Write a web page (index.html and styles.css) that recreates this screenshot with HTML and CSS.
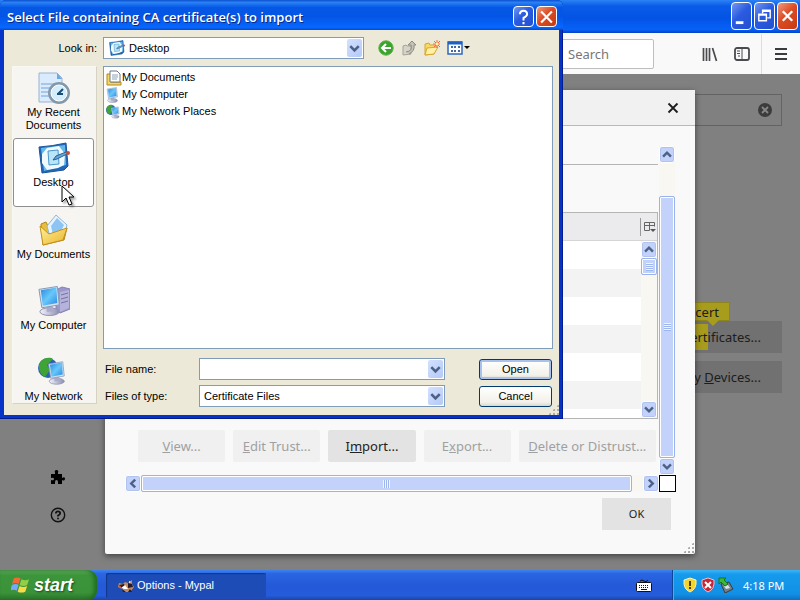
FILE: index.html
```html
<!DOCTYPE html>
<html lang="en">
<head>
<meta charset="UTF-8" />
<meta name="viewport" content="width=device-width, initial-scale=1" />
<title>Options - Mypal</title>
<link rel="stylesheet" href="styles.css">
</head>
<body>

<!-- shared icons -->
<svg class="defs" aria-hidden="true">
  <linearGradient id="screen" x1="0" y1="0" x2="1" y2="1">
    <stop offset="0" stop-color="#2a86dd" /><stop offset=".5" stop-color="#68c8fa" /><stop offset="1" stop-color="#2b87e3" />
  </linearGradient>
  <linearGradient id="metal" x1="0" y1="0" x2="1" y2="0">
    <stop offset="0" stop-color="#f4f4fb" /><stop offset="1" stop-color="#8c8cb4" />
  </linearGradient>
  <linearGradient id="folder" x1="0" y1="0" x2="1" y2="1">
    <stop offset="0" stop-color="#fff09a" /><stop offset="1" stop-color="#eab42c" />
  </linearGradient>
  <symbol id="chevron" viewBox="0 0 16 16">
    <path d="M3.5 5.5 8 10l4.500-4.500" fill="none" stroke="#4d6185" stroke-width="2.8" />
  </symbol>
  <symbol id="desktop" viewBox="0 0 32 32">
    <path d="M1 5Q15 4 28 1l2 23-4 4-22 3Z" fill="#2168b8" stroke="#1b559c" />
    <path d="M3 6 27 3l1 20-22 6Z" fill="#62b8ec" />
    <path d="m9 6 12-2 6 8-1 11-6 3-11 2-5-7V12Z" fill="#f0fafa" />
    <path d="m10 9 10-1 1 14-10 1Z" fill="#b9e5f8" stroke="#4c96cb" />
    <path d="m15 18 3-4 10-4 1 2-10 5Z" fill="#6ba4d6" stroke="#28619a" />
    <circle cx="30" cy="11" r="2" fill="#c64d39" />
  </symbol>
  <symbol id="documents" viewBox="0 0 32 32">
    <path d="m3 10 5-2 2 4 12 3 7-1-3 12L5 31Z" fill="#e9bd3c" stroke="#b38419" />
    <path d="M9 12 18 1l11 10-3 11-14 1Z" fill="#e7f4ff" stroke="#8fb6d8" />
    <path d="m13 12 6-8 7 7-4 8-7 2Z" fill="#8cc5f3" />
    <path d="m2 12 9 8 18-6-4 12L5 31Z" fill="url(#folder)" stroke="#c19120" />
  </symbol>
  <symbol id="papers" viewBox="0 0 16 16">
    <path d="M1 4h4v8h10v3H1Z" fill="#f6d75f" stroke="#ad8a27" />
    <path d="M4 1h7l3 3v8H4Z" fill="#fff" stroke="#6c7789" />
    <path d="M6 5h6M6 7h6M6 9h5" stroke="#8da0b5" />
  </symbol>
  <symbol id="monitor" viewBox="0 0 32 32">
    <ellipse cx="13" cy="27" rx="10" ry="4" fill="url(#metal)" stroke="#8f8fae" />
    <path d="M10 20h6l1 7h-7Z" fill="#aaaacb" />
    <path d="m2 4 19-3 2 19-18 3Z" fill="#d5e3f2" stroke="#8399b5" />
    <path d="m4 5 16-3 1 16-15 3Z" fill="url(#screen)" />
  </symbol>
  <symbol id="computer" viewBox="0 0 32 32">
    <path d="m18 5 6-3 8 2v20l-10 4-4-3Z" fill="#9b97cb" stroke="#8380b4" />
    <path d="m22 7 9-2v18l-9 4Z" fill="#b5b2dc" />
    <path d="m23 10 7-2m-7 6 7-2m-7 6 7-2" stroke="#77739f" />
    <use href="#monitor" width="31" height="32" x="-1" />
  </symbol>
  <symbol id="network" viewBox="0 0 32 32">
    <circle cx="10" cy="12" r="10" fill="#2b62b9" />
    <path d="M3 5c4-4 10-4 12-2L9 9l3 5-5 7C1 18-1 10 3 5Z" fill="#3fa335" />
    <use href="#monitor" x="9" y="2" width="24" height="30" />
  </symbol>
</svg>

<main class="desktop">

  <section class="browser" aria-label="Options - Mypal">
    <header class="browser-title">
      <button class="caption" aria-label="Minimize"><svg viewBox="0 0 20 24"><path d="M4 19h8" stroke="#fff" stroke-width="3" /></svg></button>
      <button class="caption" aria-label="Restore"><svg viewBox="0 0 20 24"><path d="M8 9V6h8v8h-3M8 7h8M4 10h8v7H4ZM4 11h8" fill="none" stroke="#fff" stroke-width="1.5" /></svg></button>
      <button class="caption caption-close" aria-label="Close"><svg viewBox="0 0 20 24"><path d="m5 7 10 10M15 7 5 17" stroke="#fff" stroke-width="2.4" /></svg></button>
    </header>
    <nav class="toolbar">
      <input class="web-search" type="search" placeholder="Search" aria-label="Search the web">
      <button class="tool" aria-label="Library"><svg viewBox="0 0 16 16"><path d="M1.5 2v13M4.5 2v13M7.5 2v13M10.5 2l4 13" fill="none" stroke="#4a4a4f" stroke-width="1.7" /></svg></button>
      <button class="tool" aria-label="Sidebars"><svg viewBox="0 0 16 16"><rect x="1" y="2" width="14" height="12" rx="2" fill="none" stroke="#4a4a4f" stroke-width="1.8" /><path d="M8 2v12M3 5h3M3 7.5h3M4 10h2" stroke="#4a4a4f" /></svg></button>
      <button class="tool tool-menu" aria-label="Open menu"><svg viewBox="0 0 16 16"><path d="M2 3h12M2 8h12M2 13h12" stroke="#3a3a3f" stroke-width="1.8" /></svg></button>
    </nav>
    <div class="page">
      <aside class="page-side">
        <a href="#addons" aria-label="Extensions and themes"><svg viewBox="0 0 16 16"><path d="M1 5h4V3.5Q4 1 6.500 1T8 3.500V5h4v4q3-2 3 .8T12 11v4H8v-2q0-2-1.500-2T5 13v2H1v-4q3 1 3-1T1 9Z" /></svg></a>
        <a href="#support" aria-label="Support"><svg viewBox="0 0 16 16"><circle cx="8" cy="8" r="6.7" fill="none" stroke="#111" stroke-width="1.4" /><path d="M5.800 6.500Q6 4.300 8 4.300t2.200 2Q10.200 7.500 8 8.500v1M8 10.800v1.500" fill="none" stroke="#111" stroke-width="1.8" /></svg></a>
      </aside>
      <div class="page-main">
        <div class="option-search">
          <button aria-label="Clear search"><svg viewBox="0 0 16 16"><circle cx="8" cy="8" r="7" fill="#3c3c3c" /><path d="m5 5 6 6m0-6-6 6" stroke="#888" stroke-width="1.8" /></svg></button>
        </div>
        <span class="match-tip">cert</span>
        <button class="page-button">View <mark>Cert</mark>ificates...</button>
        <button class="page-button">Security <u>D</u>evices...</button>
      </div>
    </div>
  </section>

  <section class="manager" role="dialog" aria-label="Certificate Manager">
    <header class="manager-head">
      <button aria-label="Close"><svg viewBox="0 0 12 12"><path d="m1.500 1.500 9 9m0-9-9 9" stroke="#1c1c1c" stroke-width="1.8" /></svg></button>
    </header>
    <div class="manager-scroll">
      <div class="manager-content">
        <div class="tabs"></div>
        <div class="certs">
          <div class="certs-head">
            <button aria-label="Select columns to display"><svg viewBox="0 0 12 12"><path d="M.5 1.500h10v4M.5 1.500v8h5M.5 4.500h10M5.500 1.500v8" fill="none" stroke="#666" /><path d="M6 8h6l-3 3Z" fill="#555" /></svg></button>
          </div>
          <div class="certs-body">
            <div class="cert-rows"></div>
            <div class="scroll scroll-v">
              <button aria-label="Scroll up"><svg class="up"><use href="#chevron" /></svg></button>
              <div class="thumb thumb-short"><i class="grip"></i></div>
              <button class="end" aria-label="Scroll down"><svg><use href="#chevron" /></svg></button>
            </div>
          </div>
        </div>
        <div class="actions">
          <button disabled><u>V</u>iew...</button>
          <button disabled><u>E</u>dit Trust...</button>
          <button>I<u>m</u>port...</button>
          <button disabled>E<u>x</u>port...</button>
          <button class="wide" disabled><u>D</u>elete or Distrust...</button>
        </div>
      </div>
      <div class="scroll scroll-v">
        <button aria-label="Scroll up"><svg class="up"><use href="#chevron" /></svg></button>
        <div class="track"></div>
        <div class="thumb thumb-fill"><i class="grip"></i></div>
        <button aria-label="Scroll down"><svg><use href="#chevron" /></svg></button>
      </div>
      <div class="scroll scroll-h">
        <button aria-label="Scroll left"><svg class="left"><use href="#chevron" /></svg></button>
        <div class="thumb thumb-fill"><i class="grip"></i></div>
        <div class="track"></div>
        <button aria-label="Scroll right"><svg class="right"><use href="#chevron" /></svg></button>
      </div>
      <div class="corner"></div>
    </div>
    <footer class="manager-foot"><button>OK</button></footer>
    <i class="resizer"></i>
  </section>

  <section class="picker" role="dialog" aria-labelledby="pickerTitle">
    <header class="picker-title">
      <h1 id="pickerTitle">Select File containing CA certificate(s) to import</h1>
      <button class="caption caption-small" aria-label="Help"><svg viewBox="0 0 20 20"><path d="M6 7q0-4 4-4t4 4q0 2-4 4v3M10 15.500V18" fill="none" stroke="#fff" stroke-width="2.2" /></svg></button>
      <button class="caption caption-small caption-close" aria-label="Close"><svg viewBox="0 0 20 20"><path d="m4 4 12 12M16 4 4 16" stroke="#fff" stroke-width="2.4" /></svg></button>
    </header>
    <div class="picker-body">
      <label class="look-label" for="lookIn">Look in:</label>
      <div class="look-row">
        <div class="combo combo-look">
          <svg class="combo-icon"><use href="#desktop" /></svg>
          <select id="lookIn"><option>Desktop</option></select>
          <span class="arrow"><svg><use href="#chevron" /></svg></span>
        </div>
        <div class="picker-tools">
          <button aria-label="Back"><svg viewBox="0 0 16 16"><circle cx="8" cy="8" r="7.2" fill="#3ba42d" stroke="#5bb04c" /><path d="M13 8H4m4-4L4 8l4 4" fill="none" stroke="#fff" stroke-width="2" /></svg></button>
          <button aria-label="Up one level"><svg viewBox="0 0 16 16"><path d="m2 6 3-1 1 1h4v8l-8 1Z" fill="#d6d4c9" stroke="#a5a398" /><path d="M5 12q7-1 5-7H7l4-4 4 4h-2q1 6-5 9" fill="#c4c2b8" stroke="#8d8b82" /></svg></button>
          <button aria-label="Create new folder"><svg viewBox="0 0 16 16"><path d="m1 4 4-1 1 2h6v3l-2 6-9 1Z" fill="#f7d868" stroke="#d7a631" /><path d="m3 8 11-1-4 7-9 1Z" fill="#fff1a4" stroke="#d7a631" /><path d="M13 0v8M9 4h7M10 1l6 6m0-6-6 6" stroke="#ef6b3a" /><circle cx="13" cy="4" r="1.3" fill="#fff4a3" /></svg></button>
          <button class="view-menu" aria-label="View menu"><svg viewBox="0 0 23 16"><rect x="1" y="2" width="14" height="12" fill="#fff" stroke="#2f68bd" stroke-width="1.5" /><path d="M1 3h14" stroke="#1c61c6" stroke-width="3" /><path d="M4 7h2m1 0h2m2 0h2M4 11h2m1 0h2m2 0h2" stroke="#41699f" stroke-width="2" /><path d="M17 6h6l-3 3Z" /></svg></button>
        </div>
      </div>

      <nav class="places">
        <button><svg viewBox="0 0 32 32"><path d="M1 1h18l5 5v24H1Z" fill="#d9ebfc" stroke="#9ab3d1" /><path d="M19 1v6h5" fill="#6aa9e5" /><path d="M3 12h14M3 16h10M3 20h9M3 24h10" stroke="#96bce3" stroke-width="1.5" /><circle cx="21" cy="21" r="9.5" fill="#d3eefa" stroke="#8498ac" stroke-width="3" /><circle cx="21" cy="21" r="8" fill="none" stroke="#fff" /><path d="m20 22 5-5m-6 5h6" stroke="#174d79" stroke-width="2" /></svg>My Recent Documents</button>
        <button class="current"><svg><use href="#desktop" /></svg>Desktop</button>
        <button><svg><use href="#documents" /></svg>My Documents</button>
        <button><svg><use href="#computer" /></svg>My Computer</button>
        <button><svg><use href="#network" /></svg>My Network</button>
      </nav>

      <div class="picker-main">
        <ul class="files">
          <li><svg><use href="#papers" /></svg>My Documents</li>
          <li><svg><use href="#monitor" /></svg>My Computer</li>
          <li><svg><use href="#network" /></svg>My Network Places</li>
        </ul>
        <form class="fields">
          <label for="fileName">File name:</label>
          <div class="combo">
            <select id="fileName"><option></option></select>
            <span class="arrow"><svg><use href="#chevron" /></svg></span>
          </div>
          <button type="button" class="xp-button default">Open</button>
          <label for="fileType">Files of type:</label>
          <div class="combo">
            <select id="fileType"><option>Certificate Files</option></select>
            <span class="arrow"><svg><use href="#chevron" /></svg></span>
          </div>
          <button type="button" class="xp-button">Cancel</button>
        </form>
      </div>
    </div>
    <i class="resizer"></i>
  </section>

  <svg class="pointer" viewBox="0 0 14 22" aria-hidden="true"><path d="M1 1v16l4-4 3 7 3-1-3-7h5Z" fill="#fff" stroke="#000" /></svg>
</main>

<footer class="taskbar">
  <button class="start">
    <svg viewBox="0 0 20 20"><path d="M3 3q4-2 7 0L8 9Q5 7 1 9Z" fill="#f26a35" /><path d="M11 4q4 2 8 0l-2 6q-4 2-8 0Z" fill="#91cf48" /><path d="M1 10q4-2 7 0l-2 6q-3-2-7 0Z" fill="#78a8fa" /><path d="M9 11q4 2 8 0l-2 6q-4 2-8 0Z" fill="#fadb45" /></svg>
    start
  </button>
  <button class="task">
    <svg viewBox="0 0 16 16"><path d="m1 5 4 1 2-2 3 1 4-3v4l2 3-4 5H6L4 11 0 9Z" fill="#c58a65" /><path d="m1 7 5-1 2 4-4 1Zm9-2 4 1 1 3-5 1ZM4 11l4 3H5Zm8 0 2 3h-4Z" fill="#221d27" /><path d="m7 7 3 4H6l-3-1ZM11 3l2 1-2 1Z" fill="#fff" /><path d="m0 7 3 1-1 2Z" fill="#e24a2a" /></svg>
    Options - Mypal
  </button>
  <button class="keyboard" aria-label="On-screen keyboard"><svg viewBox="0 0 16 16"><path d="M4 4q2-2 4 0t4-1" fill="none" stroke="#111" /><rect x=".5" y="5.500" width="15" height="9" rx="1" fill="#fff" stroke="#111" /><path d="M3 8.500h10M3 10.500h10" stroke="#111" stroke-dasharray="1 1" /><path d="M5 12.500h6" stroke="#111" /></svg></button>
  <div class="tray">
    <svg viewBox="0 0 16 16"><path d="m8 1 6 2q1 9-6 12Q1 12 2 3Z" fill="#f5d42d" stroke="#f7f1bf" /><path d="M8 4v5m0 1v2" stroke="#493d0c" stroke-width="2" /></svg>
    <svg viewBox="0 0 16 16"><path d="m8 1 6 2q1 9-6 12Q1 12 2 3Z" fill="#c72535" stroke="#edbec6" /><path d="m5 5 6 6m0-6-6 6" stroke="#fff" stroke-width="2" /></svg>
    <svg viewBox="0 0 16 16"><path d="m3 7 8-2 4 7-8 4Z" fill="#777e86" stroke="#323f47" /><path d="m6 9 4-1 2 3-4 1Z" fill="#dce3e8" /><path d="M1 1h7L6 3l4 4-3 2-4-4-2 2Z" fill="#39b83b" stroke="#17751d" /></svg>
    <time>4:18 PM</time>
  </div>
</footer>

</body>
</html>
```
FILE: styles.css
```css
* {
  box-sizing: border-box;
}
body {
  margin: 0;
  height: 100vh;
  display: flex;
  flex-direction: column;
  overflow: hidden;
  font: 11px/13px "Liberation Sans", Arial, sans-serif;
  color: #000;
}
button, select, input {
  font: inherit;
  color: inherit;
}
button {
  padding: 0;
  border: none;
  background: none;
}
svg {
  display: block;
  width: 16px;
  height: 16px;
  flex: none;
}
.defs {
  position: absolute;
  width: 0;
  height: 0;
}
.desktop {
  position: relative;
  flex: 1;
  min-height: 0;
}

/* window caption buttons */
.caption {
  width: 21px;
  height: 28px;
  display: grid;
  place-items: center;
  border: 1px solid #fff;
  border-radius: 4px;
  background: linear-gradient(135deg, #7497ef, #2a5be0 45%, #2450cf);
}
.caption svg {
  width: 19px;
  height: 24px;
}
.caption-small {
  height: 21px;
}
.caption-small svg {
  width: 19px;
  height: 18px;
}
.caption-close {
  background: linear-gradient(135deg, #f0997c, #dc4c24 45%, #c53a12);
}

/* browser */
.browser {
  height: 100%;
  display: flex;
  flex-direction: column;
}
.browser-title {
  height: 33px;
  display: flex;
  justify-content: flex-end;
  gap: 2px;
  padding: 2px 2px 3px;
  background: linear-gradient(#2b83f5, #0a5ce8 18%, #0453e4 55%, #0662f8 90%, #0540c0);
}
.toolbar {
  height: 41px;
  display: flex;
  align-items: center;
  justify-content: flex-end;
  background: #f9f9fa;
}
.web-search {
  width: 120px;
  height: 30px;
  margin-right: 40px;
  padding: 0 0 0 33px;
  border: 1px solid #bebebe;
  border-radius: 2px;
  background: #fff;
  font: 13px "Noto Sans", sans-serif;
}
.web-search::placeholder {
  color: #777;
}
.tool {
  width: 32px;
  height: 40px;
  display: grid;
  place-items: center;
}
.tool-menu {
  width: 39px;
  margin-left: 3px;
  border-left: 1px solid #ddd;
}
.page {
  flex: 1;
  display: flex;
  justify-content: space-between;
  padding: 20px 18px 0 50px;
  background: #808080;
  font: 13px/20px "Noto Sans", sans-serif;
  color: #1d1d1d;
}
.page-side {
  align-self: flex-end;
  display: grid;
  gap: 22px;
  padding-bottom: 47px;
}
.page-main {
  width: 300px;
  display: flex;
  flex-direction: column;
  align-items: flex-end;
}
.option-search {
  width: 100%;
  height: 32px;
  display: flex;
  align-items: center;
  justify-content: flex-end;
  padding-right: 8px;
  margin-bottom: 176px;
  border: 1px solid #636363;
}
.match-tip {
  position: relative;
  height: 19px;
  margin-right: 52px;
  padding: 0 10px;
  line-height: 18px;
  border: 1px solid #8d8420;
  background: #a89c1c;
}
.match-tip::after {
  content: "";
  position: absolute;
  top: 100%;
  left: 50%;
  border: 6px solid transparent;
  border-top-color: #a89c1c;
  border-bottom: none;
}
.page-button {
  width: 150px;
  height: 32px;
  margin-bottom: 8px;
  padding-right: 21px;
  text-align: right;
  white-space: nowrap;
  background: #717171;
}
.page-button mark {
  padding: 4px 0;
  background: #a89c1c;
  color: inherit;
}

/* certificate manager */
.manager {
  position: absolute;
  top: 90px;
  left: 105px;
  right: 105px;
  background: #f9f9f9;
  box-shadow: 0 2px 6px rgba(0, 0, 0, .5);
  border-radius: 2px;
  font: 13px/20px "Noto Sans", sans-serif;
  color: #222;
}
.manager-head {
  height: 36px;
  display: flex;
  justify-content: flex-end;
  align-items: center;
  padding-right: 16px;
  border-bottom: 1px solid #b9b9b9;
  background: #f1f1f1;
}
.manager-head svg {
  width: 12px;
  height: 12px;
}
.manager-scroll {
  display: grid;
  grid-template-columns: 1fr 17px;
  grid-template-rows: auto 17px;
  padding: 20px 19px 0 20px;
}
.manager-content {
  padding-right: 1px;
}
.tabs {
  height: 19px;
  border-bottom: 1px solid #b5b5b5;
}
.certs {
  margin-top: 47px;
  border: 1px solid #b5b5b5;
}
.certs-head {
  height: 28px;
  display: flex;
  justify-content: flex-end;
  align-items: center;
  background: #ebebee;
  border-bottom: 1px solid #d5d5d5;
}
.certs-head button {
  padding: 3px 1px 3px 3px;
  border-left: 1px solid #999;
}
.certs-head svg {
  width: 12px;
  height: 12px;
}
.certs-body {
  height: 177px;
  display: flex;
}
.cert-rows {
  flex: 1;
  background: repeating-linear-gradient(#fff 0 28px, #f3f3f4 28px 56px);
}
.actions {
  display: flex;
  gap: 8px;
  padding: 11px 2px 13px 13px;
}
.actions button {
  flex: 87;
  height: 32px;
  white-space: nowrap;
  background: #e3e3e4;
  border-radius: 2px;
}
.actions .wide {
  flex: 137;
}
.actions button:disabled {
  background: #f0f0f1;
  color: #a0a0a0;
}
.manager-foot {
  display: flex;
  justify-content: flex-end;
  padding: 6px 24px 24px;
}
.manager-foot button {
  width: 69px;
  height: 32px;
  background: #e3e3e4;
  font-size: 11px;
}

/* scrollbars */
.scroll {
  display: flex;
  background: #f8f7f2;
}
.scroll button {
  width: 16px;
  height: 17px;
  flex: none;
  border: 1px solid #fff;
  border-radius: 3px;
  background: #c3d2fa;
  box-shadow: inset 0 0 0 1px #b1c2ee;
}
.scroll button svg {
  width: 14px;
  height: 15px;
}
.scroll-v {
  width: 16px;
  flex-direction: column;
}
.scroll-h {
  height: 17px;
}
.thumb {
  display: grid;
  place-items: center;
  border: 1px solid #9ab3ea;
  box-shadow: inset 0 0 0 1px #fff;
  border-radius: 2px;
  background: #c3d2fb;
}
.thumb-short {
  height: 17px;
}
.thumb-fill {
  flex: 1;
}
.scroll-v .track {
  height: 33px;
}
.scroll-h .track {
  width: 11px;
}
.end {
  margin-top: auto;
}
.grip {
  width: 7px;
  height: 8px;
  background: repeating-linear-gradient(#eff4ff 0 1px, #9db6ee 1px 2px);
}
.scroll-h .grip {
  background: repeating-linear-gradient(90deg, #eff4ff 0 1px, #9db6ee 1px 2px);
}
.up {
  transform: rotate(180deg);
}
.left {
  transform: rotate(90deg);
}
.right {
  transform: rotate(-90deg);
}
.corner {
  border: 1px solid #000;
  background: #fff;
}
.resizer {
  position: absolute;
  right: 1px;
  bottom: 1px;
  width: 11px;
  height: 11px;
  background: radial-gradient(circle, #aaa 1px, transparent 1px) 0 0 / 4px 4px;
  clip-path: polygon(100% 0, 100% 100%, 0 100%);
}

/* file picker */
.picker {
  position: absolute;
  top: 0;
  left: 0;
  right: 237px;
  padding: 0 4px 4px;
  border-radius: 6px 6px 0 0;
  background: #0634c8;
  box-shadow: inset -1px -1px #001c8f;
}
.picker-title {
  height: 30px;
  display: flex;
  align-items: center;
  gap: 2px;
  margin: 0 -4px;
  padding: 3px 6px 0 7px;
  border-radius: 6px 6px 0 0;
  background: linear-gradient(#0b4fd0, #2a81f4 8%, #0557e5 25%, #0455e6 55%, #0667ff 92%, #0349cc);
}
.picker-title h1 {
  flex: 1;
  margin: 0;
  font: 600 13px/16px "Open Sans", sans-serif;
  color: #fff;
  text-shadow: 1px 1px #0b2a86;
}
.picker-body {
  display: grid;
  grid-template-columns: 85px 1fr;
  column-gap: 6px;
  row-gap: 7px;
  padding: 7px 6px 8px 8px;
  background: #ece9d8;
}
.look-label {
  padding-top: 5px;
  text-align: right;
}
.look-row {
  display: flex;
  gap: 14px;
}
.combo {
  position: relative;
  height: 22px;
}
.combo select {
  width: 100%;
  height: 100%;
  padding: 0 20px 0 4px;
  appearance: none;
  border: 1px solid #7f9db9;
  border-radius: 0;
  background: #fff;
}
.combo-look {
  width: 261px;
}
.combo-look select {
  padding-left: 25px;
}
.combo-icon {
  position: absolute;
  top: 3px;
  left: 6px;
}
.arrow {
  position: absolute;
  top: 2px;
  right: 2px;
  bottom: 2px;
  width: 15px;
  display: grid;
  place-items: center;
  border-radius: 2px;
  background: linear-gradient(135deg, #d3e1ff, #b4c9f7);
  pointer-events: none;
}
.arrow svg {
  width: 15px;
  height: 15px;
}
.picker-tools {
  display: flex;
  align-items: center;
  gap: 7px;
}
.view-menu svg {
  width: 23px;
}
.places {
  align-self: start;
  height: 338px;
  display: flex;
  flex-direction: column;
  padding-right: 2px;
  border: 1px solid #f9f8f3;
  border-right-color: #d6d3c4;
  border-bottom-color: #d6d3c4;
  background: #f6f5f1;
}
.places button {
  height: 71px;
  display: flex;
  flex-direction: column;
  align-items: center;
  gap: 2px;
  padding-top: 5px;
}
.places button:last-child {
  height: 52px;
}
.places svg {
  width: 32px;
  height: 32px;
}
.places .current {
  height: 69px;
  margin-bottom: 2px;
  padding-top: 3px;
  border: 1px solid #8e8f8f;
  border-radius: 3px;
  background: #fff;
}
.files {
  height: 283px;
  margin: 0;
  padding: 2px;
  list-style: none;
  border: 1px solid #7f9db9;
  background: #fff;
}
.files li {
  height: 17px;
  display: flex;
  align-items: center;
}
.fields {
  display: grid;
  grid-template-columns: 96px 246px 1fr 73px;
  align-items: center;
  row-gap: 5px;
  padding: 9px 1px 0 0;
}
.fields label {
  padding-left: 2px;
}
.fields .xp-button {
  grid-column: 4;
}
.xp-button {
  height: 21px;
  border: 1px solid #003c74;
  border-radius: 3px;
  background: linear-gradient(#fff, #f2f1ea 80%, #dbd7ca);
}
.xp-button.default {
  box-shadow: inset 0 0 0 2px #a8c2ef;
}
.picker .resizer {
  right: 4px;
  bottom: 4px;
}
.pointer {
  position: absolute;
  top: 185px;
  left: 61px;
  width: 14px;
  height: 22px;
  filter: drop-shadow(2px 2px 1px rgba(0, 0, 0, .35));
}

/* taskbar */
.taskbar {
  height: 30px;
  display: flex;
  background: linear-gradient(#3e83f0, #2a66e2 12%, #2459d8 50%, #245cdc 85%, #1c45a8);
  color: #fff;
}
.start {
  width: 97px;
  display: flex;
  align-items: center;
  gap: 4px;
  padding-left: 11px;
  border-radius: 0 9px 9px 0;
  background: linear-gradient(#63ad60, #3b953a 18%, #3b9339 75%, #2b742c);
  box-shadow: inset -3px 0 4px #206b23;
  font: italic bold 18px "Liberation Sans", Arial, sans-serif;
  text-shadow: 1px 1px 2px #164c18;
}
.start svg {
  width: 19px;
  height: 20px;
}
.task {
  width: 160px;
  display: flex;
  align-items: center;
  gap: 3px;
  margin: 3px 0 2px 9px;
  padding-left: 12px;
  border-radius: 2px;
  background: #1d4cb6;
  box-shadow: inset 1px 1px 1px #12368a;
  font: 11px/13px "Liberation Sans", sans-serif;
}
.keyboard {
  margin-left: auto;
  margin-right: 20px;
}
.tray {
  width: 128px;
  display: flex;
  align-items: center;
  gap: 2px;
  padding-left: 9px;
  border-left: 1px solid #0b4795;
  background: linear-gradient(#3fb2f6, #159aec 15%, #1290e6 80%, #0e6fc2);
  box-shadow: inset 1px 0 #35b7f5;
}
.tray time {
  margin-left: 7px;
  font: 11px/13px "Noto Sans", sans-serif;
}
```
